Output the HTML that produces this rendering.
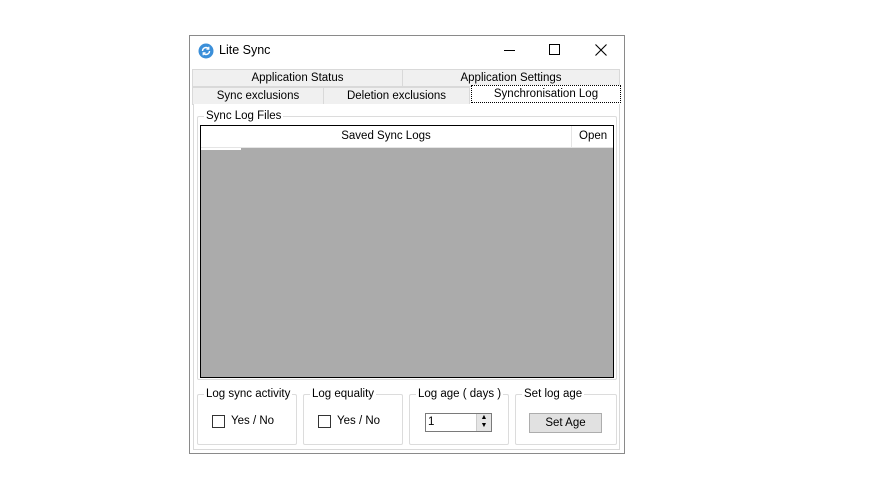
<!DOCTYPE html>
<html><head><style>
*{box-sizing:border-box}
body{margin:0;width:890px;height:500px;background:#fff;font-family:"Liberation Sans",sans-serif;font-size:11.5px;color:#000;position:relative;overflow:hidden}
.a{position:absolute;white-space:nowrap}
.tab{position:absolute;background:#f0f0f0;border:1px solid #d9d9d9;text-align:center;line-height:16px}
.gb{position:absolute;border:1px solid #dcdcdc;border-radius:2px}
.gb span{position:absolute;top:-8px;left:6px;background:#fff;padding:0 2px;line-height:14px;white-space:nowrap}
.cb{position:absolute;width:13px;height:13px;border:1px solid #333;background:#fff}
</style></head><body>
<div class="a" style="left:189px;top:35px;width:436px;height:419px;border:1px solid #8a8a8a;background:#fff"></div>
<svg class="a" style="left:198px;top:43px" width="16" height="16" viewBox="0 0 16 16"><circle cx="8" cy="8" r="7.5" fill="#3b8fd9"/><path d="M4.5 8a3.5 3.5 0 0 1 6-2.4M11.5 8a3.5 3.5 0 0 1-6 2.4" stroke="#fff" stroke-width="1.4" fill="none"/><path d="M10.8 3.8v2.4H8.4M5.2 12.2V9.8h2.4" stroke="#fff" stroke-width="1.2" fill="none"/></svg>
<div class="a" style="left:219px;top:43px;font-size:12.5px">Lite Sync</div>
<div class="a" style="left:504px;top:50px;width:11px;height:1px;background:#000"></div>
<div class="a" style="left:549px;top:44px;width:11px;height:11px;border:1px solid #000"></div>
<svg class="a" style="left:595px;top:44px" width="12" height="12"><path d="M0.5 0.5l11 11M11.5 0.5l-11 11" stroke="#000" stroke-width="1.1"/></svg>
<div class="tab" style="left:192px;top:69px;width:211px;height:18px">Application Status</div>
<div class="tab" style="left:402px;top:69px;width:218px;height:18px">Application Settings</div>
<div class="tab" style="left:192px;top:87px;width:132px;height:18px">Sync exclusions</div>
<div class="tab" style="left:323px;top:87px;width:147px;height:18px">Deletion exclusions</div>
<div class="a" style="left:471px;top:85px;width:150px;height:18px;background:#fff;border:1px dotted #000;text-align:center;line-height:16px">Synchronisation Log</div>
<div class="a" style="left:193px;top:104px;width:427px;height:346px;border:1px solid #d9d9d9;border-top:none;background:#fff"></div>
<div class="gb" style="left:197px;top:116px;width:420px;height:264px"><span>Sync Log Files</span></div>
<div class="a" style="left:200px;top:125px;width:414px;height:253px;border:1px solid #000;background:#ababab"></div>
<div class="a" style="left:201px;top:126px;width:412px;height:22px;background:#fff;border-bottom:1px solid #e5e5e5"></div>
<div class="a" style="left:201px;top:148px;width:40px;height:2px;background:#fff"></div>
<div class="a" style="left:201px;top:130px;width:370px;text-align:center">Saved Sync Logs</div>
<div class="a" style="left:571px;top:126px;width:1px;height:22px;background:#e5e5e5"></div>
<div class="a" style="left:579px;top:130px">Open</div>
<div class="gb" style="left:197px;top:394px;width:100px;height:51px"><span>Log sync activity</span></div>
<div class="gb" style="left:303px;top:394px;width:100px;height:51px"><span>Log equality</span></div>
<div class="gb" style="left:409px;top:394px;width:100px;height:51px"><span>Log age ( days )</span></div>
<div class="gb" style="left:515px;top:394px;width:102px;height:51px"><span>Set log age</span></div>
<div class="cb" style="left:212px;top:415px"></div><div class="a" style="left:231px;top:415px">Yes / No</div>
<div class="cb" style="left:318px;top:415px"></div><div class="a" style="left:337px;top:415px">Yes / No</div>
<div class="a" style="left:425px;top:413px;width:67px;height:19px;border:1px solid #7a7a7a;background:#fff;padding:2px 0 0 2px">1</div>
<div class="a" style="left:476px;top:414px;width:15px;height:17px;background:#e5e5e5;border-left:1px solid #ccc;font-size:7px;line-height:8px;text-align:center">▲<br>▼</div>
<div class="a" style="left:529px;top:413px;width:73px;height:20px;background:#e1e1e1;border:1px solid #adadad;text-align:center;line-height:18px">Set Age</div>
</body></html>
